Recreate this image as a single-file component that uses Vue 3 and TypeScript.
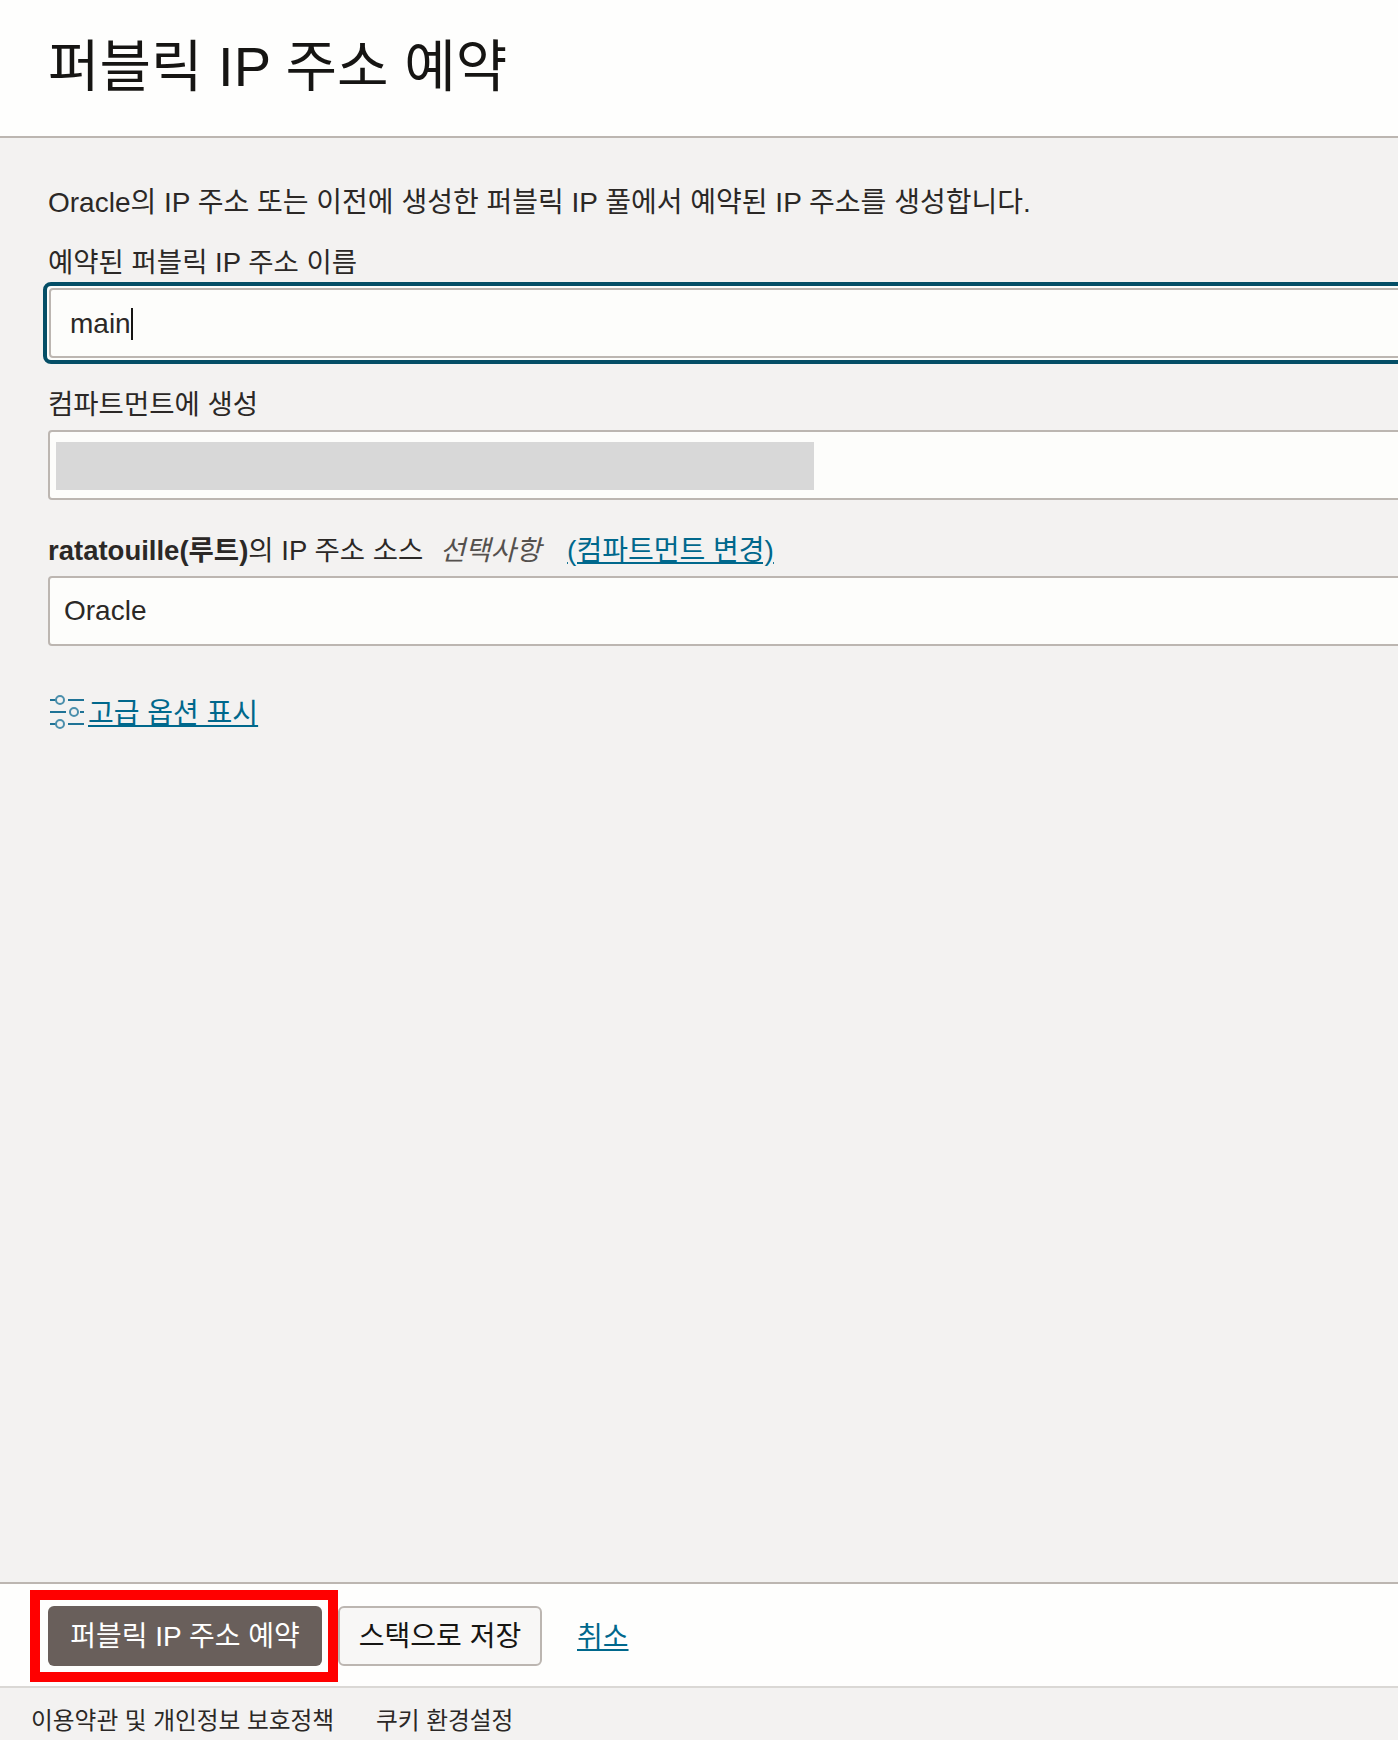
<template>
  <div class="page">
    <header class="head">
      <h1>퍼블릭 IP 주소 예약</h1>
    </header>

    <main class="body">
      <p class="intro">Oracle의 IP 주소 또는 이전에 생성한 퍼블릭 IP 풀에서 예약된 IP 주소를 생성합니다.</p>

      <label class="label first">예약된 퍼블릭 IP 주소 이름</label>
      <div class="focus-ring">
        <div class="field name-field">main<span class="caret"></span></div>
      </div>

      <label class="label second">컴파트먼트에 생성</label>
      <div class="field masked-field">
        <div class="mask"></div>
      </div>

      <div class="label third">
        <b>ratatouille(루트)</b>의 IP 주소 소스
        <i>선택사항</i>
        <a href="#">(컴파트먼트 변경)</a>
      </div>
      <div class="field">Oracle</div>

      <a class="advanced" href="#">
        <svg width="36" height="34" viewBox="0 0 36 34" fill="none" stroke="#1f7396" stroke-width="2">
          <path d="M0 5h6M18 5h16M0 17h16M30 17h4M0 29h6M18 29h16" />
          <circle cx="10" cy="5" r="4" stroke="#4b8fac" />
          <circle cx="24" cy="17" r="4" stroke="#4b8fac" />
          <circle cx="10" cy="29" r="4" stroke="#4b8fac" />
        </svg>
        <span>고급 옵션 표시</span>
      </a>
    </main>

    <div class="actions">
      <div class="primary-wrap">
        <button class="btn primary">퍼블릭 IP 주소 예약</button>
        <div class="callout"></div>
      </div>
      <button class="btn secondary">스택으로 저장</button>
      <a class="cancel" href="#">취소</a>
    </div>

    <footer class="foot">
      <a href="#">이용약관 및 개인정보 보호정책</a>
      <a href="#">쿠키 환경설정</a>
    </footer>
  </div>
</template>

<script setup lang="ts">
</script>

<style>
html,
body {
  margin: 0;
  background: #f3f2f1;
}
</style>

<style scoped>
.page {
  width: 1398px;
  height: 1740px;
  display: flex;
  flex-direction: column;
  overflow: hidden;
  background: #f3f2f1;
  color: #2b2826;
  font-family: "Liberation Sans", "Noto Sans CJK KR", sans-serif;
  font-size: 28px;
}

.head {
  height: 136px;
  flex-shrink: 0;
  display: flex;
  align-items: center;
  padding: 0 0 0 48px;
  background: #fefefd;
  border-bottom: 2px solid #bcb6b1;
}

h1 {
  margin: -13px 0 0;
  font-size: 56px;
  font-weight: 400;
  color: #161513;
}

.body {
  flex: 1;
  padding: 0 0 0 48px;
}

.intro {
  margin: 0;
  padding-top: 45px;
  line-height: 40px;
}

.label {
  display: block;
  line-height: 40px;
  font-size: 27.5px;
}

.first {
  margin-top: 20px;
  height: 39px;
}

.second {
  margin-top: 21px;
  height: 45px;
}

.third {
  margin-top: 25px;
  height: 51px;
  display: flex;
  align-items: center;
  white-space: pre;
}

.third i {
  margin-left: 9px;
  color: #55514e;
}

.third a {
  margin-left: 26px;
  font-size: 28px;
  color: #00688c;
}

.field {
  box-sizing: border-box;
  width: 1500px;
  height: 70px;
  padding: 0 14px;
  display: flex;
  align-items: center;
  background: #fdfdfb;
  border: 2px solid #bcb6b1;
  border-radius: 4px;
}

.focus-ring {
  box-sizing: border-box;
  width: 1508px;
  height: 82px;
  margin-left: -5px;
  padding: 2px;
  border: 4px solid #044e66;
  border-radius: 8px;
  background: #fdfdfb;
}

.name-field {
  width: 100%;
  height: 100%;
  padding-left: 19px;
  padding-top: 2px;
}

.caret {
  width: 2px;
  height: 32px;
  background: #161513;
}

.masked-field {
  padding: 0 6px;
}

.mask {
  width: 758px;
  height: 48px;
  margin-top: 1px;
  background: #d8d8d8;
}

.advanced {
  margin-top: 45px;
  display: inline-flex;
  align-items: center;
  gap: 2px;
  color: #00688c;
}

.advanced svg {
  flex-shrink: 0;
  margin: 2px 0 0 2px;
}

.actions {
  box-sizing: border-box;
  height: 106px;
  flex-shrink: 0;
  padding: 22px 0 0 48px;
  display: flex;
  align-items: flex-start;
  background: #fefefd;
  border-top: 2px solid #bcb6b1;
  border-bottom: 2px solid #dad8d5;
}

.primary-wrap {
  position: relative;
  margin-right: 16px;
}

.btn {
  display: block;
  box-sizing: border-box;
  height: 60px;
  padding: 0 0 4px;
  border-radius: 6px;
  font-family: inherit;
  font-size: 28px;
}

.primary {
  width: 274px;
  background: #695f5b;
  border: none;
  color: #fff;
}

.callout {
  position: absolute;
  left: -18px;
  top: -16px;
  width: 308px;
  height: 92px;
  box-sizing: border-box;
  border: 10px solid #ff0000;
  pointer-events: none;
}

.secondary {
  width: 204px;
  background: #f8f7f6;
  border: 2px solid #bcb6b1;
  color: #161513;
}

.cancel {
  margin: 9px 0 0 35px;
  color: #00688c;
}

.foot {
  box-sizing: border-box;
  height: 52px;
  flex-shrink: 0;
  padding: 10px 0 0 31px;
  display: flex;
  align-items: center;
  gap: 42px;
  font-size: 23.7px;
}

.foot a {
  color: #2b2826;
  text-decoration: none;
}
</style>
